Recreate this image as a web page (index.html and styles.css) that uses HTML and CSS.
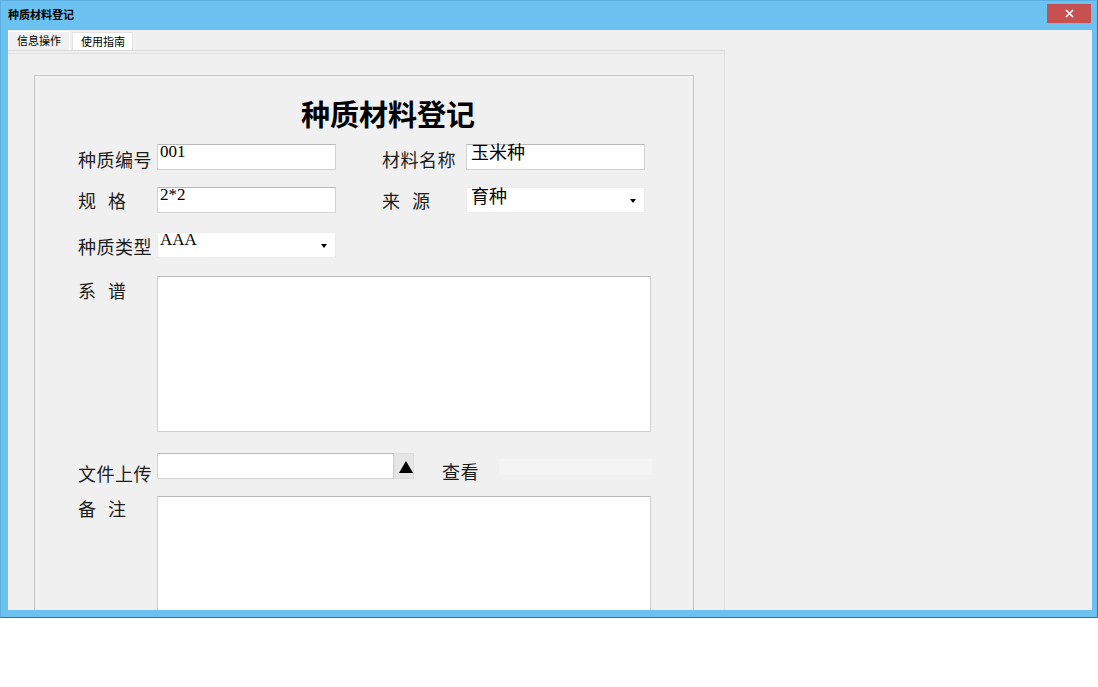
FILE: index.html
```html
<!DOCTYPE html>
<html lang="zh">
<head>
<meta charset="utf-8">
<title>种质材料登记</title>
<link rel="stylesheet" href="styles.css">
</head>
<body>
<div class="window">
  <div class="titlebar">
    <span class="title">种质材料登记</span>
    <div class="close">
      <svg width="9" height="9" viewBox="0 0 9 9"><path d="M1 1 L8 8 M8 1 L1 8" stroke="#fff" stroke-width="1.6" fill="none"/></svg>
    </div>
  </div>
  <div class="client">
    <div class="tabs">
      <div class="tab tab-a">信息操作</div>
      <div class="tab tab-b">使用指南</div>
    </div>
    <div class="panel">
      <div class="page">
        <div class="group">
          <h1 class="heading">种质材料登记</h1>
          <div class="form">
            <div class="row r1">
              <div class="label">种质编号</div>
              <div class="input"><span class="val">001</span></div>
              <div class="label wide gap">材料名称</div>
              <div class="input"><span class="val cjk up">玉米种</span></div>
            </div>
            <div class="row r2">
              <div class="label spaced">规 格</div>
              <div class="input"><span class="val">2*2</span></div>
              <div class="label wide gap spaced">来 源</div>
              <div class="select"><span class="val cjk">育种</span><span class="arrow"></span></div>
            </div>
            <div class="row r3">
              <div class="label">种质类型</div>
              <div class="select"><span class="val">AAA</span><span class="arrow"></span></div>
            </div>
            <div class="row r4">
              <div class="label spaced">系 谱</div>
              <div class="area"></div>
            </div>
            <div class="row r5">
              <div class="label">文件上传</div>
              <div class="input file"></div>
              <div class="btn">
                <svg width="14" height="12" viewBox="0 0 14 12"><polygon points="7,0 14,12 0,12" fill="#000"/></svg>
              </div>
              <div class="label view">查看</div>
              <div class="faint"></div>
            </div>
            <div class="row r6">
              <div class="label spaced">备 注</div>
              <div class="area tall"></div>
            </div>
          </div>
        </div>
      </div>
    </div>
  </div>
</div>
</body>
</html>
```
FILE: styles.css
```css
html, body {
  margin: 0;
  padding: 0;
}
body {
  width: 1098px;
  height: 687px;
  overflow: hidden;
  background: #ffffff;
  font-family: "Noto Sans CJK SC", "Noto Sans", sans-serif;
  color: #000;
}
.window {
  width: 1098px;
  height: 618px;
  box-sizing: border-box;
  background: #6bc1f0;
  border: 1px solid #5aaee0;
  border-right-color: #3f6f8c;
  border-bottom-color: #3f6f8c;
  display: flex;
  flex-direction: column;
}
.titlebar {
  height: 29px;
  flex: none;
  display: flex;
  align-items: flex-start;
  padding-left: 7px;
}
.title {
  font-size: 11px;
  line-height: 11px;
  font-weight: 700;
  margin-top: 8px;
  color: #000;
}
.close {
  margin-left: auto;
  margin-right: 6px;
  margin-top: 3px;
  width: 44px;
  height: 19px;
  background: #c75050;
  display: flex;
  align-items: center;
  justify-content: center;
}
.client {
  margin-left: 7px;
  width: 1084px;
  height: 580px;
  flex: none;
  background: #f0f0f0;
  overflow: hidden;
}
.tabs {
  height: 20px;
  display: flex;
  align-items: flex-end;
}
.tab {
  box-sizing: border-box;
  font-size: 11px;
  line-height: 17px;
  padding-left: 8px;
  color: #000;
}
.tab-a {
  width: 62px;
  height: 19px;
  background: #f0f0f0;
  border: 1px solid #ffffff;
  border-bottom: none;
}
.tab-b {
  margin-left: 2px;
  width: 61px;
  height: 18px;
  background: #ffffff;
  border: 1px solid #e3e3e3;
  border-bottom: none;
  line-height: 16px;
}
.panel {
  width: 717px;
  height: 560px;
  box-sizing: border-box;
  border-top: 1px solid #d9d9d9;
  border-right: 1px solid #e2e2e2;
  padding-top: 2px;
}
.page {
  border-top: 1px solid #dedede;
  padding: 21px 0 0 26px;
}
.group {
  width: 660px;
  height: 600px;
  box-sizing: border-box;
  border: 1px solid #c6c6c6;
}
.heading {
  margin: 21px 0 0 266px;
  font-size: 29px;
  line-height: 32px;
  font-weight: 700;
  color: #000;
}
.form {
  padding-left: 43px;
}
.row {
  display: flex;
  align-items: flex-start;
}
.label {
  flex: none;
  width: 79px;
  font-size: 18px;
  line-height: 20px;
  padding-top: 6px;
  letter-spacing: 0.5px;
  color: #1b1b1b;
  white-space: nowrap;
}
.label.wide {
  width: 84px;
}
.label.gap {
  margin-left: 46px;
}
.label.spaced {
  word-spacing: 7px;
}
.r1 { margin-top: 15px; }
.r1 .label { padding-top: 5px; }
.r2 { margin-top: 17px; }
.r2 .label { padding-top: 3px; }
.r3 { margin-top: 19px; }
.r3 .label { padding-top: 4px; }
.r4 { margin-top: 18px; }
.r4 .label { padding-top: 4px; }
.r5 { margin-top: 21px; }
.r5 .label { padding-top: 10px; }
.r5 .label.view { padding-top: 8px; }
.r6 { margin-top: 13px; }
.r6 .label { padding-top: 2px; }
.input, .select {
  flex: none;
  width: 179px;
  height: 26px;
  box-sizing: border-box;
  background: #ffffff;
  padding: 0 2px;
  display: flex;
  align-items: flex-start;
}
.input {
  border: 1px solid #d2d2d2;
  border-top-color: #b9b9b9;
}
.select {
  border: 1px solid #ececec;
}
.val {
  display: block;
  font-family: "Liberation Serif", serif;
  font-size: 17px;
  line-height: 14px;
  color: #000;
  white-space: nowrap;
}
.val.cjk {
  font-family: "Noto Sans CJK SC", sans-serif;
  font-size: 18px;
  line-height: 14px;
  padding-left: 2px;
}
.val.up {
  line-height: 12px;
}
.arrow {
  width: 0;
  height: 0;
  margin-left: auto;
  margin-right: 6px;
  align-self: center;
  margin-top: 2px;
  border-left: 3px solid transparent;
  border-right: 3px solid transparent;
  border-top: 4px solid #000;
}
.area {
  flex: none;
  width: 494px;
  height: 156px;
  box-sizing: border-box;
  background: #ffffff;
  border: 1px solid #d0d0d0;
  border-top-color: #b9b9b9;
}
.area.tall {
  height: 200px;
}
.input.file {
  width: 237px;
}
.btn {
  flex: none;
  width: 20px;
  height: 26px;
  box-sizing: border-box;
  background: #e6e6e6;
  border: 1px solid #dcdcdc;
  display: flex;
  align-items: center;
  justify-content: flex-end;
  padding-top: 2px;
}
.label.view {
  width: auto;
  margin-left: 28px;
}
.faint {
  flex: none;
  margin-left: 20px;
  margin-top: 6px;
  width: 153px;
  height: 16px;
  background: #f4f4f4;
}
```
